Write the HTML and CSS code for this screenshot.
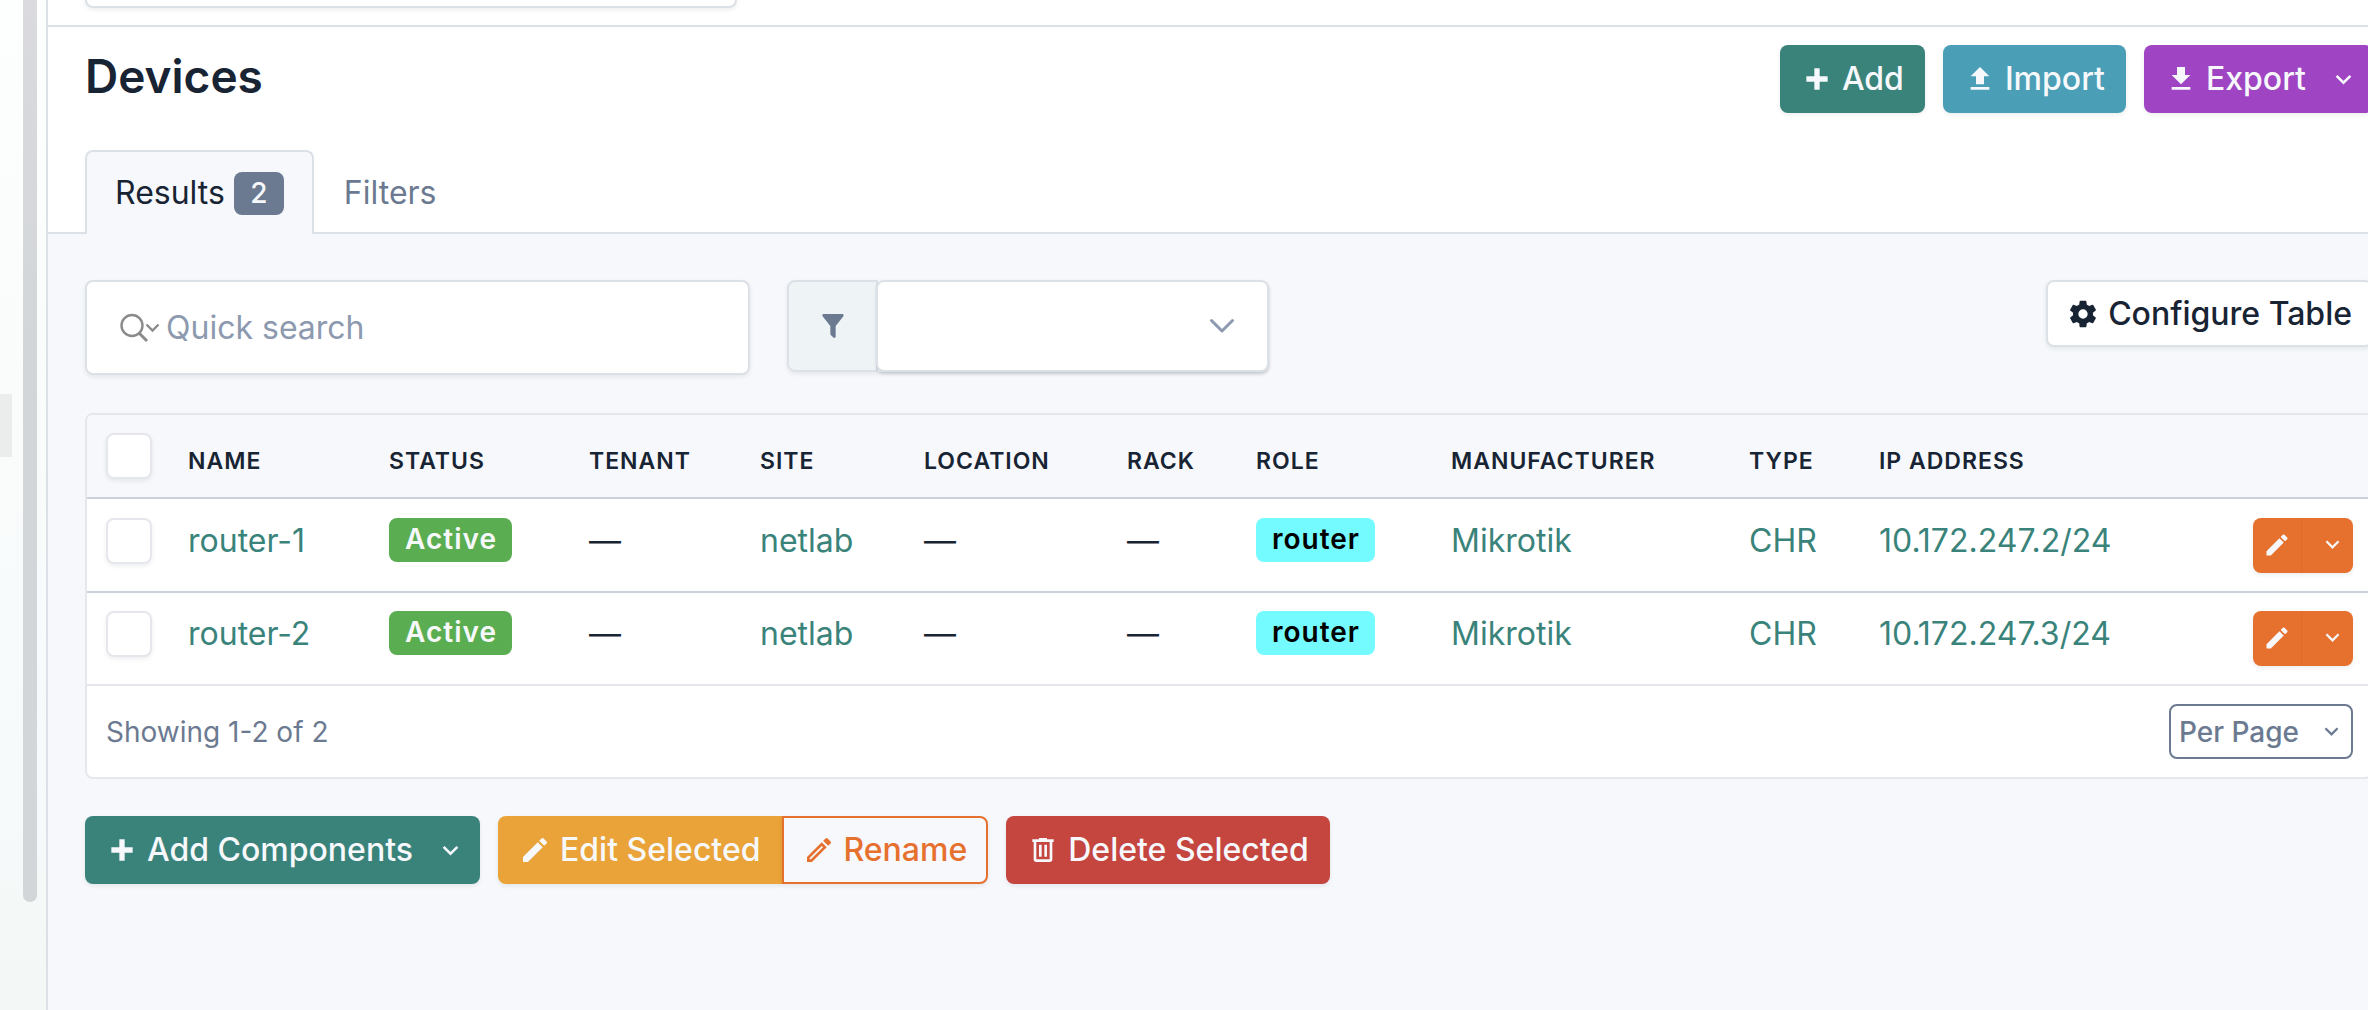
FILE: index.html
```
<!DOCTYPE html>
<html lang="en">
<head>
<meta charset="utf-8">
<meta name="viewport" content="width=device-width, initial-scale=1">
<title>Devices</title>
<link rel="stylesheet" href="styles.css">
</head>
<body>
<svg class="sprite" aria-hidden="true">
  <symbol id="plus" viewBox="0 0 24 24"><path d="M20 14H14V20H10V14H4V10H10V4H14V10H20V14Z"/></symbol>
  <symbol id="upload" viewBox="0 0 24 24"><path d="M9,16V10H5L12,3L19,10H15V16H9M5,20V18H19V20H5Z"/></symbol>
  <symbol id="download" viewBox="0 0 24 24"><path d="M5,20H19V18H5M19,9H15V3H9V9H5L12,16L19,9Z"/></symbol>
  <symbol id="pencil" viewBox="0 0 24 24"><path d="M20.71,7.04C21.1,6.65 21.1,6 20.71,5.63L18.37,3.29C18,2.9 17.35,2.9 16.96,3.29L15.12,5.12L18.87,8.87M3,17.25V21H6.75L17.81,9.93L14.06,6.18L3,17.25Z"/></symbol>
  <symbol id="pencil-outline" viewBox="0 0 24 24"><path d="M14.06,9L15,9.94L5.92,19H5V18.08L14.06,9M17.66,3C17.41,3 17.15,3.1 16.96,3.29L15.13,5.12L18.88,8.87L20.71,7.04C21.1,6.65 21.1,6 20.71,5.63L18.37,3.29C18.17,3.09 17.92,3 17.66,3M14.06,6.19L3,17.25V21H6.75L17.81,9.94L14.06,6.19Z"/></symbol>
  <symbol id="trash" viewBox="0 0 24 24"><path d="M9,3V4H4V6H5V19A2,2 0 0,0 7,21H17A2,2 0 0,0 19,19V6H20V4H15V3H9M7,6H17V19H7V6M9,8V17H11V8H9M13,8V17H15V8H13Z"/></symbol>
  <symbol id="cog" viewBox="0 0 24 24"><path d="M12,15.5A3.5,3.5 0 0,1 8.5,12A3.5,3.5 0 0,1 12,8.5A3.5,3.5 0 0,1 15.5,12A3.5,3.5 0 0,1 12,15.5M19.43,12.97C19.47,12.65 19.5,12.33 19.5,12C19.5,11.67 19.47,11.34 19.43,11L21.54,9.37C21.73,9.22 21.78,8.95 21.66,8.73L19.66,5.27C19.54,5.05 19.27,4.96 19.05,5.05L16.56,6.05C16.04,5.66 15.5,5.32 14.87,5.07L14.5,2.42C14.46,2.18 14.25,2 14,2H10C9.75,2 9.54,2.18 9.5,2.42L9.13,5.07C8.5,5.32 7.96,5.66 7.44,6.05L4.95,5.05C4.73,4.96 4.46,5.05 4.34,5.27L2.34,8.73C2.21,8.95 2.27,9.22 2.46,9.37L4.57,11C4.53,11.34 4.5,11.67 4.5,12C4.5,12.33 4.53,12.65 4.57,12.97L2.46,14.63C2.27,14.78 2.21,15.05 2.34,15.27L4.34,18.73C4.46,18.95 4.73,19.03 4.95,18.95L7.44,17.94C7.96,18.34 8.5,18.68 9.13,18.93L9.5,21.58C9.54,21.82 9.75,22 10,22H14C14.25,22 14.46,21.82 14.5,21.58L14.87,18.93C15.5,18.67 16.04,18.34 16.56,17.94L19.05,18.95C19.27,19.03 19.54,18.95 19.66,18.73L21.66,15.27C21.78,15.05 21.73,14.78 21.54,14.63L19.43,12.97Z"/></symbol>
  <symbol id="filter" viewBox="0 0 24 24"><path d="M14,12V19.88C14.04,20.18 13.94,20.5 13.71,20.71C13.32,21.1 12.69,21.1 12.3,20.71L10.29,18.7C10.06,18.47 9.96,18.16 10,17.87V12H9.97L4.21,4.62C3.87,4.19 3.95,3.56 4.38,3.22C4.57,3.08 4.78,3 5,3V3H19V3C19.22,3 19.43,3.08 19.62,3.22C20.05,3.56 20.13,4.19 19.79,4.62L14.03,12H14Z"/></symbol>
  <symbol id="caret" viewBox="0 0 16 16"><path d="M1.5 4.5L8 11L14.5 4.5" fill="none" stroke="currentColor" stroke-width="2.4"/></symbol>
  <symbol id="chevron" viewBox="0 0 26 26"><path d="M2.500 7.500L13 18L23.500 7.500" fill="none" stroke="currentColor" stroke-width="3" stroke-linecap="round" stroke-linejoin="round"/></symbol>
  <symbol id="search" viewBox="0 0 40 30"><g fill="none" stroke="currentColor" stroke-width="2.4"><circle cx="12" cy="12.500" r="10.500"/><path d="M19.500 20.500L27 28" stroke-width="3"/><path d="M26.500 11.500L32.500 17.500L38.500 11.500"/></g></symbol>
</svg>

<div class="app">
  <aside class="sidebar">
    <div class="sidebar-active"></div>
    <div class="sidebar-scroll"></div>
  </aside>

  <div class="page">
    <header class="topbar"><input class="global-search" type="search" aria-label="Search"></header>

    <div class="page-header">
      <div class="title-row">
        <h1>Devices</h1>
        <div class="actions">
          <button class="btn teal" type="button"><svg class="icon"><use href="#plus"/></svg>Add</button>
          <button class="btn cyan" type="button"><svg class="icon"><use href="#upload"/></svg>Import</button>
          <button class="btn purple" type="button"><svg class="icon"><use href="#download"/></svg>Export<svg class="caret"><use href="#caret"/></svg></button>
        </div>
      </div>
      <nav class="tabs">
        <a class="tab active" href="#results">Results<span class="count">2</span></a>
        <a class="tab" href="#filters">Filters</a>
      </nav>
    </div>

    <main class="content" id="results">
      <div class="toolbar">
        <label class="search">
          <svg class="search-icon"><use href="#search"/></svg>
          <input type="text" placeholder="Quick search" aria-label="Quick search">
        </label>
        <div class="filter">
          <label class="filter-label" for="saved-filter" aria-label="Saved filter"><svg class="icon"><use href="#filter"/></svg></label>
          <div class="select">
            <select id="saved-filter"><option></option></select>
            <svg class="select-caret"><use href="#chevron"/></svg>
          </div>
        </div>
        <button class="btn plain configure" type="button"><svg class="icon"><use href="#cog"/></svg>Configure Table</button>
      </div>

      <section class="card">
        <table>
          <colgroup>
            <col class="c-check"><col class="c-name"><col class="c-status"><col class="c-tenant"><col class="c-site"><col class="c-location"><col class="c-rack"><col class="c-role"><col class="c-maker"><col class="c-type"><col class="c-ip"><col>
          </colgroup>
          <thead>
            <tr>
              <th><input type="checkbox" aria-label="Select all"></th>
              <th>Name</th><th>Status</th><th>Tenant</th><th>Site</th><th>Location</th><th>Rack</th><th>Role</th><th>Manufacturer</th><th>Type</th><th>IP Address</th><th></th>
            </tr>
          </thead>
          <tbody>
            <tr>
              <td><input type="checkbox" aria-label="Select router-1"></td>
              <td><a href="#router-1">router-1</a></td>
              <td><span class="badge green">Active</span></td>
              <td>—</td>
              <td><a href="#netlab">netlab</a></td>
              <td>—</td>
              <td>—</td>
              <td><span class="badge aqua">router</span></td>
              <td><a href="#mikrotik">Mikrotik</a></td>
              <td><a href="#chr">CHR</a></td>
              <td><a href="#ip-2">10.172.247.2/24</a></td>
              <td class="row-actions"><div class="split"><button type="button" aria-label="Edit router-1"><svg class="icon"><use href="#pencil"/></svg></button><button type="button" aria-label="More actions"><svg class="caret"><use href="#caret"/></svg></button></div></td>
            </tr>
            <tr>
              <td><input type="checkbox" aria-label="Select router-2"></td>
              <td><a href="#router-2">router-2</a></td>
              <td><span class="badge green">Active</span></td>
              <td>—</td>
              <td><a href="#netlab">netlab</a></td>
              <td>—</td>
              <td>—</td>
              <td><span class="badge aqua">router</span></td>
              <td><a href="#mikrotik">Mikrotik</a></td>
              <td><a href="#chr">CHR</a></td>
              <td><a href="#ip-3">10.172.247.3/24</a></td>
              <td class="row-actions"><div class="split"><button type="button" aria-label="Edit router-2"><svg class="icon"><use href="#pencil"/></svg></button><button type="button" aria-label="More actions"><svg class="caret"><use href="#caret"/></svg></button></div></td>
            </tr>
          </tbody>
        </table>
        <footer class="card-footer">
          <span>Showing 1-2 of 2</span>
          <button class="per-page" type="button">Per Page<svg class="caret"><use href="#caret"/></svg></button>
        </footer>
      </section>

      <div class="bulk">
        <button class="btn teal" type="button"><svg class="icon"><use href="#plus"/></svg>Add Components<svg class="caret"><use href="#caret"/></svg></button>
        <div class="group">
          <button class="btn amber" type="button"><svg class="icon"><use href="#pencil"/></svg>Edit Selected</button>
          <button class="btn outline" type="button"><svg class="icon"><use href="#pencil-outline"/></svg>Rename</button>
        </div>
        <button class="btn red" type="button"><svg class="icon"><use href="#trash"/></svg>Delete Selected</button>
      </div>
    </main>
  </div>
</div>
</body>
</html>
```
FILE: styles.css
```
:root {
  --text: #182433;
  --muted: #6c7a91;
  --line: #dce1e7;
  --surface: #f6f8fb;
  --teal: #3a837b;
  --orange: #e6702e;
  --shadow: 0 2px 4px rgba(24, 36, 51, 0.08);
}

* { box-sizing: border-box; }

body {
  margin: 0;
  overflow-x: hidden;
  background: var(--surface);
  color: var(--text);
  font-family: Inter, "Liberation Sans", sans-serif;
  font-size: 32px;
  line-height: 46px;
}

button, input, select { font: inherit; color: inherit; }
button { cursor: pointer; }
a { color: var(--teal); text-decoration: none; }

.sprite { position: absolute; width: 0; height: 0; }
.icon { width: 32px; height: 32px; fill: currentColor; flex: none; }
.caret { width: 17px; height: 17px; flex: none; }

.app { display: flex; min-height: 100vh; }

/* Sidebar */
.sidebar {
  flex: none;
  display: flex;
  justify-content: space-between;
  width: 48px;
  padding-right: 9px;
  border-right: 2px solid var(--line);
  background: linear-gradient(#fdfefe, #fafcfb 40%, #f6fafb 75%, #f3f8f6);
}
.sidebar-active { width: 12px; height: 63px; margin-top: 394px; background: #ebedec; }
.sidebar-scroll {
  width: 14px;
  height: 902px;
  border-radius: 0 0 7px 7px;
  background: linear-gradient(#dadadf, #d2d6d8 40%);
}

/* The page column runs a little past the right edge of the window */
.page { flex: 1; min-width: 0; margin-right: -5px; }

.topbar {
  display: flex;
  align-items: flex-start;
  height: 27px;
  padding-left: 37px;
  border-bottom: 2px solid var(--line);
  background: #fff;
  overflow: hidden;
}
.global-search {
  width: 652px;
  height: 67px;
  margin-top: -59px;
  border: 2px solid var(--line);
  border-radius: 8px;
  background: #fff;
  box-shadow: var(--shadow);
}

/* Title and tabs */
.page-header {
  padding-left: 37px;
  background: #fff;
  box-shadow: inset 0 -2px var(--line);
}
.title-row { display: flex; justify-content: space-between; padding-top: 18px; }
h1 { margin: 0; font-size: 46px; font-weight: 600; line-height: 62px; }
.actions { display: flex; gap: 18px; }
.tabs { display: flex; margin-top: 37px; }
.tab {
  display: flex;
  align-items: center;
  gap: 9px;
  height: 84px;
  padding: 0 28px;
  border: 2px solid transparent;
  border-bottom: 0;
  border-radius: 8px 8px 0 0;
  color: var(--muted);
}
.tab.active { border-color: var(--line); background: var(--surface); color: var(--text); }
.count {
  width: 50px;
  height: 43px;
  border-radius: 8px;
  background: var(--muted);
  color: var(--surface);
  font-size: 28px;
  font-weight: 500;
  line-height: 42px;
  text-align: center;
}

/* Buttons */
.btn {
  display: flex;
  align-items: center;
  gap: 9px;
  height: 68px;
  padding: 0 19px;
  border: 2px solid transparent;
  border-radius: 8px;
  color: var(--surface);
  font-weight: 500;
  white-space: nowrap;
  box-shadow: var(--shadow);
}
.btn .caret { margin-left: 20px; }
.teal { background: var(--teal); }
.cyan { background: #4a9fb6; }
.purple { background: #9f45c3; }
.amber { background: #eaa338; }
.red { background: #c5453f; }
.plain { border-color: var(--line); background: #fff; color: var(--text); }
.outline { border-color: var(--orange); background: var(--surface); color: var(--orange); }

/* Toolbar */
.content { padding: 46px 0 0 37px; }
.toolbar { display: flex; align-items: flex-start; gap: 37px; margin-bottom: 38px; }
.search {
  display: flex;
  align-items: center;
  gap: 6px;
  width: 665px;
  height: 95px;
  padding: 0 33px;
  border: 2px solid var(--line);
  border-radius: 8px;
  background: #fff;
  box-shadow: var(--shadow);
}
.search-icon { width: 40px; height: 30px; flex: none; color: #8b8b8b; }
.search input { flex: 1; min-width: 0; padding: 0; border: 0; outline: 0; background: none; }
.search input::placeholder { color: #8d99ae; opacity: 1; }
.filter { display: flex; width: 482px; height: 92px; border-radius: 8px; box-shadow: var(--shadow); }
.filter-label {
  display: grid;
  place-items: center;
  width: 91px;
  border: 2px solid var(--line);
  border-radius: 8px 0 0 8px;
  background: #eef3f6;
  color: var(--muted);
}
.select { display: grid; flex: 1; margin-left: -2px; }
.select select {
  grid-area: 1 / 1;
  appearance: none;
  border: 2px solid var(--line);
  border-radius: 8px;
  background: #fff;
  box-shadow: 0 2px 3px rgba(24, 36, 51, 0.16);
}
.select-caret {
  grid-area: 1 / 1;
  place-self: center end;
  width: 26px;
  height: 26px;
  margin-right: 34px;
  color: #8d99ae;
  pointer-events: none;
}
.configure { height: 67px; margin-left: auto; }

/* Table */
.card { border: 2px solid #e6e7ec; border-radius: 8px; background: #fff; overflow: hidden; }
table { width: 100%; table-layout: fixed; border-collapse: separate; border-spacing: 0; }
.c-check { width: 82px; }
.c-name { width: 201px; }
.c-status { width: 200px; }
.c-tenant { width: 171px; }
.c-site { width: 164px; }
.c-location { width: 203px; }
.c-rack { width: 129px; }
.c-role { width: 195px; }
.c-maker { width: 298px; }
.c-type { width: 130px; }
.c-ip { width: 280px; }
th, td { padding: 18px 0 18px 19px; text-align: left; white-space: nowrap; }
th {
  border-bottom: 2px solid #cbd1d9;
  background: var(--surface);
  font-size: 23px;
  font-weight: 600;
  letter-spacing: 1px;
  line-height: 36px;
  text-transform: uppercase;
  vertical-align: bottom;
}
td { border-bottom: 2px solid #e6e7ec; vertical-align: top; }
tbody tr:first-child td { padding-top: 19px; border-bottom-color: #cbd1d9; }
input[type="checkbox"] {
  appearance: none;
  display: block;
  width: 46px;
  height: 46px;
  margin: 0;
  border: 2px solid #e6e7ec;
  border-radius: 8px;
  background: #fff;
  box-shadow: var(--shadow);
}
.badge {
  display: block;
  width: max-content;
  height: 44px;
  padding: 0 15px 0 16px;
  border-radius: 8px;
  font-size: 28px;
  font-weight: 600;
  letter-spacing: 1px;
  line-height: 43px;
}
.green { background: #5aae51; color: var(--surface); }
.aqua { background: #74fbff; color: #000; }
.row-actions { padding-right: 18px; }
.split { display: flex; width: 100px; height: 55px; margin-left: auto; border-radius: 8px; background: var(--orange); color: var(--surface); box-shadow: var(--shadow); }
.split button { display: flex; align-items: center; justify-content: center; width: 48px; padding: 0 0 2px; border: 0; background: none; }
.split .icon { width: 28px; height: 28px; }
.split .caret { width: 15px; height: 15px; }
.split button + button { flex: 1; padding-left: 10px; border-left: 1px solid #dd6b2b; }

.card-footer {
  display: flex;
  align-items: center;
  justify-content: space-between;
  padding: 18px 18px 18px 19px;
  color: var(--muted);
  font-size: 28px;
}
.per-page {
  display: flex;
  align-items: center;
  gap: 25px;
  height: 55px;
  padding: 0 12px 0 8px;
  border: 2px solid var(--muted);
  border-radius: 8px;
  background: #fff;
  color: var(--muted);
  font-weight: 500;
}
.per-page .caret { width: 15px; height: 15px; }

/* Bulk actions */
.bulk { display: flex; gap: 18px; padding: 37px 0; }
.group { display: flex; }
.group .amber { border-radius: 8px 0 0 8px; }
.group .outline { border-radius: 0 8px 8px 0; }
```
